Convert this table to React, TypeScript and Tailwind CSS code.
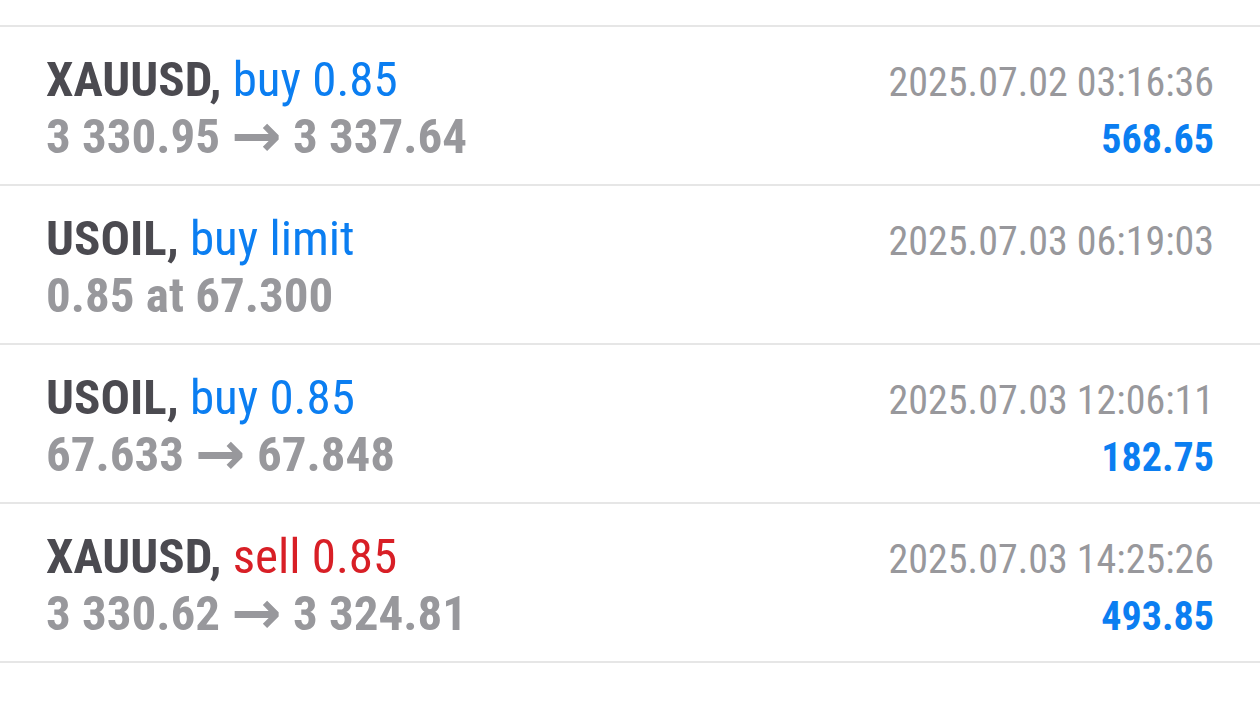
import React from 'react';

type Deal = {
  symbol: string;
  side: 'buy' | 'sell';
  action: string;
  from: string;
  to?: string;
  time: string;
  profit?: string;
};

const deals: Deal[] = [
  { symbol: 'XAUUSD', side: 'buy', action: 'buy 0.85', from: '3 330.95', to: '3 337.64', time: '2025.07.02 03:16:36', profit: '568.65' },
  { symbol: 'USOIL', side: 'buy', action: 'buy limit', from: '0.85 at 67.300', time: '2025.07.03 06:19:03' },
  { symbol: 'USOIL', side: 'buy', action: 'buy 0.85', from: '67.633', to: '67.848', time: '2025.07.03 12:06:11', profit: '182.75' },
  { symbol: 'XAUUSD', side: 'sell', action: 'sell 0.85', from: '3 330.62', to: '3 324.81', time: '2025.07.03 14:25:26', profit: '493.85' },
];

const DealRow: React.FC<{ deal: Deal }> = ({ deal }) => (
  <div className="h-[159px] border-b-2 border-[#e6e6e6] px-[46px] pt-[26px]">
    <div className="flex items-baseline justify-between leading-[54px]">
      <span className="text-[49px]">
        <span className="font-bold text-[#4b4a50]">{deal.symbol},</span>{' '}
        <span className={deal.side === 'sell' ? 'text-[#d81f26]' : 'text-[#0b7ef1]'}>{deal.action}</span>
      </span>
      <span className="text-[40px] text-[#98989c]">{deal.time}</span>
    </div>
    <div className="flex items-baseline justify-between leading-[54px]">
      <span className="text-[49px] font-bold text-[#98989c]">
        {deal.from}
        {deal.to && (
          <>
            {' '}
            <span className="relative top-[3px] inline-block font-['DejaVu_Sans',sans-serif] [font-stretch:normal] text-[60px] leading-[34px]">→</span>{' '}
            {deal.to}
          </>
        )}
      </span>
      {deal.profit && <span className="text-[40px] font-bold text-[#0b7ef1]">{deal.profit}</span>}
    </div>
  </div>
);

export default function App() {
  return (
    <div className="min-h-screen w-[1260px] bg-white font-['Roboto',sans-serif] [font-stretch:75%] pt-[25px]">
      <div className="border-t-2 border-[#e6e6e6]">
        {deals.map((d, i) => (
          <DealRow key={i} deal={d} />
        ))}
      </div>
    </div>
  );
}
